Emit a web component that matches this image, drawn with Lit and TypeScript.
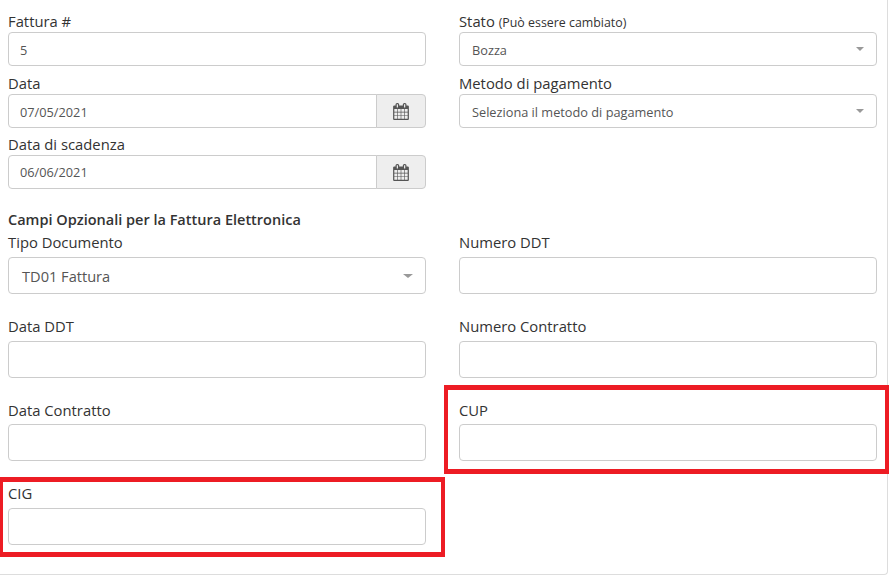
import { LitElement, html, css } from "lit";
import { customElement } from "lit/decorators.js";

const calendar = html`<svg class="cal" viewBox="0 0 1664 1792" aria-hidden="true"><path d="M128 1664h288v-288h-288v288zm352 0h320v-288h-320v288zm-352-352h288v-320h-288v320zm352 0h320v-320h-320v320zm-352-384h288v-288h-288v288zm736 736h320v-288h-320v288zm-384-736h320v-288h-320v288zm768 736h288v-288h-288v288zm-384-352h320v-320h-320v320zm-352-864v-288q0-13-9.5-22.5t-22.5-9.5h-64q-13 0-22.5 9.5t-9.5 22.5v288q0 13 9.5 22.5t22.5 9.5h64q13 0 22.5-9.5t9.5-22.5zm736 864h288v-320h-288v320zm-384-384h320v-288h-320v288zm384 0h288v-288h-288v288zm32-480v-288q0-13-9.5-22.5t-22.5-9.5h-64q-13 0-22.5 9.5t-9.5 22.5v288q0 13 9.5 22.5t22.5 9.5h64q13 0 22.5-9.5t9.5-22.5zm384-64v1280q0 52-38 90t-90 38h-1408q-52 0-90-38t-38-90v-1280q0-52 38-90t90-38h128v-96q0-66 47-113t113-47h64q66 0 113 47t47 113v96h384v-96q0-66 47-113t113-47h64q66 0 113 47t47 113v96h128q52 0 90 38t38 90z"/></svg>`;

@customElement("app-root")
export class AppRoot extends LitElement {
  static styles = css`
    :host {
      display: block;
      width: 889px;
      height: 575px;
      background: #fff;
      font-family: "Open Sans", "Liberation Sans", sans-serif;
      color: #333;
      overflow: hidden;
    }
    * { box-sizing: border-box; }
    .card {
      width: 888px;
      height: 575px;
      border-right: 1px solid #ddd;
      border-bottom: 1px solid #ddd;
      border-bottom-right-radius: 4px;
      padding: 12px 10px 0 8px;
    }
    .cols {
      display: grid;
      grid-template-columns: 418px 418px;
      column-gap: 33px;
    }
    .stack { display: flex; flex-direction: column; }
    .stack .field + .field { margin-top: 8px; }
    .stack .field.tight { margin-top: 7px; }
    .tight .box { padding-top: 0; }
    label {
      display: block;
      height: 20px;
      font-size: 14.8px;
      line-height: 18px;
      white-space: nowrap;
    }
    label small { font-size: 12.4px; }
    .box {
      display: flex;
      align-items: center;
      height: 34px;
      border: 1px solid #ccc;
      border-radius: 4px;
      background: #fff;
      font-size: 12.75px;
      color: #555;
      padding: 1px 0 0 11px;
      white-space: nowrap;
    }
    .sel { position: relative; padding-left: 12px; }
    .caret {
      position: absolute;
      right: 12px;
      top: 50%;
      margin-top: -2px;
      width: 0;
      height: 0;
      border-left: 4px solid transparent;
      border-right: 4px solid transparent;
      border-top: 4px solid #999;
    }
    .group { display: flex; height: 34px; }
    .group .box { flex: 1; border-radius: 4px 0 0 4px; }
    .addon {
      display: flex;
      align-items: center;
      justify-content: center;
      width: 50px;
      margin-left: -1px;
      background: #eee;
      border: 1px solid #ccc;
      border-radius: 0 4px 4px 0;
    }
    .cal { width: 16px; height: 17px; fill: #555; }
    h4 {
      margin: 21px 0 0;
      height: 23px;
      font-size: 14.5px;
      line-height: 20px;
      font-weight: 600;
      color: #333;
    }
    .opt {
      display: grid;
      grid-template-columns: 418px 418px;
      column-gap: 33px;
      row-gap: 22.67px;
    }
    .opt label { margin-bottom: 4px; }
    .opt .box { height: 37px; font-size: 14.6px; padding: 1px 0 0 13px; }
    .opt .caret {
      border-left-width: 5px;
      border-right-width: 5px;
    }
    .opt .late label { line-height: 20px; }
    .field { position: relative; }
    .mark {
      position: absolute;
      border: 4px solid #ed1c24;
      border-top-width: 5px;
      border-bottom-width: 5px;
      pointer-events: none;
    }
    .mark.cup { left: -15px; right: -12px; top: -15px; bottom: -13px; }
    .mark.cig { left: -8px; right: -19px; top: -7px; bottom: -12px; border-left-width: 3px; }
  `;

  private plain(name: string, mark = "", cls = "") {
    return html`<div class="field ${cls}">
      <label>${name}</label>
      <div class="box"></div>
      ${mark ? html`<div class="mark ${mark}"></div>` : ""}
    </div>`;
  }

  private date(name: string, value: string, cls = "") {
    return html`<div class="field ${cls}">
      <label>${name}</label>
      <div class="group">
        <div class="box">${value}</div>
        <div class="addon">${calendar}</div>
      </div>
    </div>`;
  }

  render() {
    return html`<div class="card">
      <div class="cols">
        <div class="stack">
          <div class="field">
            <label>Fattura #</label>
            <div class="box">5</div>
          </div>
          ${this.date("Data", "07/05/2021")}
          ${this.date("Data di scadenza", "06/06/2021", "tight")}
        </div>
        <div class="stack">
          <div class="field">
            <label>Stato <small>(Può essere cambiato)</small></label>
            <div class="box sel">Bozza<span class="caret"></span></div>
          </div>
          <div class="field">
            <label>Metodo di pagamento</label>
            <div class="box sel">Seleziona il metodo di pagamento<span class="caret"></span></div>
          </div>
        </div>
      </div>
      <h4>Campi Opzionali per la Fattura Elettronica</h4>
      <div class="opt">
        <div class="field">
          <label>Tipo Documento</label>
          <div class="box sel">TD01 Fattura<span class="caret"></span></div>
        </div>
        ${this.plain("Numero DDT")}
        ${this.plain("Data DDT")}
        ${this.plain("Numero Contratto")}
        ${this.plain("Data Contratto", "", "late")}
        ${this.plain("CUP", "cup", "late")}
        ${this.plain("CIG", "cig")}
      </div>
    </div>`;
  }
}
